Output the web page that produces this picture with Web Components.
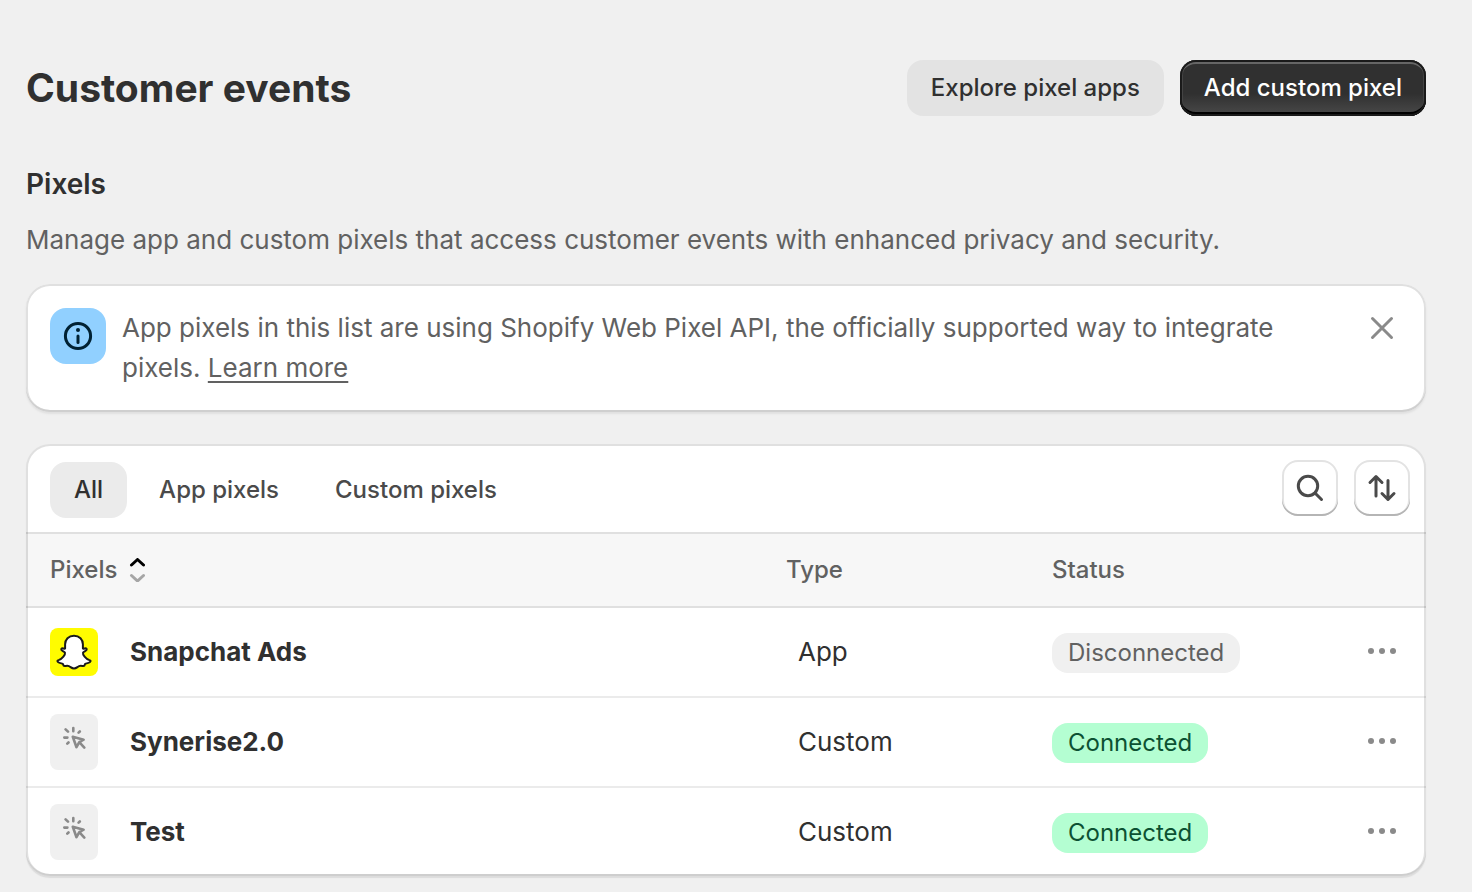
<!DOCTYPE html>
<html lang="en">
<head>
<meta charset="utf-8">
<meta name="viewport" content="width=device-width, initial-scale=1">
<title>Customer events</title>
<style>
  body {
    margin: 0;
    background: #f0f0f0;
    color: #303030;
    font-family: Inter, "Liberation Sans", sans-serif;
    font-size: 26px;
    line-height: 40px;
  }
</style>
</head>
<body>
<events-page>
  <ui-button slot="actions">Explore pixel apps</ui-button>
  <ui-button slot="actions" variant="primary">Add custom pixel</ui-button>
  <info-banner>App pixels in this list are using Shopify Web Pixel API, the officially supported way to integrate pixels. <a slot="link" href="#learn-more">Learn more</a></info-banner>
  <ui-card>
    <filter-bar></filter-bar>
    <pixel-table></pixel-table>
  </ui-card>
</events-page>

<script>
/** Shared base: renders `css` and `template` into an open shadow root. */
class BaseElement extends HTMLElement {
  constructor(){
    super()
    this.attachShadow({mode: 'open'})
  }

  connectedCallback(){
    this.shadowRoot.innerHTML = /* html */`
      <style>
        :host { display: block; }
        :host, * { box-sizing: border-box; }
        svg { display: block; fill: none; stroke: currentColor; stroke-width: 3; stroke-linecap: round; stroke-linejoin: round; }
        button { margin: 0; padding: 0; border: 0; background: none; color: inherit; font: inherit; cursor: pointer; }
        ${this.css}
      </style>
      ${this.template}`
    this.listen()
  }

  get css(){ return '' }
  get template(){ return '<slot></slot>' }
  listen(){}
}

/** Page frame with heading, actions and the pixels section. */
class EventsPage extends BaseElement {
  get css(){ return /* css */`
    :host { padding: 60px 46px 16px 26px; }
    header { display: flex; align-items: center; justify-content: space-between; gap: 16px; margin-bottom: 48px; }
    .actions { display: flex; gap: 16px; }
    h1, h2, p { margin: 0; }
    h1 { font-size: 39px; line-height: 56px; font-weight: 700; }
    h2 { font-size: 28px; line-height: 40px; font-weight: 600; margin-bottom: 16px; }
    p { color: #616161; margin-bottom: 24px; }
    .content { display: grid; gap: 32px; }
  `}

  get template(){ return /* html */`
    <header>
      <h1>Customer events</h1>
      <div class="actions"><slot name="actions"></slot></div>
    </header>
    <main>
      <h2>Pixels</h2>
      <p>Manage app and custom pixels that access customer events with enhanced privacy and security.</p>
      <div class="content"><slot></slot></div>
    </main>
  `}
}

class UiButton extends BaseElement {
  get css(){ return /* css */`
    button {
      height: 56px;
      padding: 0 24px;
      border-radius: 16px;
      background: #e3e3e3;
      font-size: 24px;
      line-height: 40px;
      font-weight: 500;
      white-space: nowrap;
    }
    :host([variant="primary"]) button {
      color: #fff;
      background: linear-gradient(#303030 60%, #4a4a4a);
      box-shadow: inset 0 0 0 2px #1a1a1a, inset 0 -4px 0 #000, inset 0 4px 0 #666, inset 3px 0 0 #444, inset -3px 0 0 #444;
    }
  `}

  get template(){ return '<button type="button"><slot></slot></button>' }
}

class InfoBanner extends BaseElement {
  get css(){ return /* css */`
    :host {
      display: flex;
      align-items: flex-start;
      gap: 16px;
      padding: 24px;
      border-radius: 24px;
      background: #fff;
      color: #616161;
      box-shadow: inset 0 -2px 0 #cfcfcf, inset 0 0 0 2px #e0e0e0, 0 2px 2px #e0e0e0;
    }
    .icon { flex: none; border-radius: 16px; background: #91d0ff; color: #002133; }
    .text { flex: 1; }
    button { flex: none; color: #8a8a8a; }
    ::slotted(a) { color: inherit; text-underline-offset: 4px; }
  `}

  get template(){ return /* html */`
    <span class="icon">
      <svg width="56" height="56" aria-hidden="true">
        <circle cx="28" cy="28" r="12.6"/>
        <path d="M28 28v6.5"/>
        <circle cx="28" cy="22" r="2" fill="currentColor" stroke="none"/>
      </svg>
    </span>
    <div class="text"><slot></slot><slot name="link"></slot></div>
    <button type="button" aria-label="Dismiss">
      <svg width="40" height="40" aria-hidden="true"><path d="M10.5 10.5l19 19M29.5 10.5l-19 19"/></svg>
    </button>
  `}

  listen(){
    this.shadowRoot.querySelector('button').addEventListener('click', () => this.remove())
  }
}

class UiCard extends BaseElement {
  get css(){ return /* css */`
    :host {
      position: relative;
      border-radius: 24px;
      background: #fff;
      box-shadow: 0 2px 1px #dcdcdc;
    }
    .body { overflow: hidden; border-radius: inherit; }
    /* The outline is drawn over the row separators */
    .outline {
      position: absolute;
      inset: 0;
      border-radius: inherit;
      pointer-events: none;
      box-shadow: inset 0 -2px 0 rgba(0, 0, 0, .08), inset 0 0 0 2px rgba(0, 0, 0, .12);
    }
  `}

  get template(){ return '<div class="body"><slot></slot></div><div class="outline"></div>' }
}

class FilterBar extends BaseElement {
  get css(){ return /* css */`
    :host {
      display: flex;
      align-items: flex-start;
      justify-content: space-between;
      padding: 16px 16px 14px 24px;
    }
    .tabs { display: flex; gap: 8px; padding-top: 2px; }
    .tabs button {
      height: 56px;
      padding: 0 24px;
      border-radius: 16px;
      color: #4a4a4a;
      font-size: 24px;
      font-weight: 500;
    }
    .tabs button[aria-selected="true"] { background: #ebebeb; color: #303030; }
    .tools { display: flex; gap: 16px; }
    .tools button {
      border-radius: 16px;
      color: #4a4a4a;
      box-shadow: inset 0 -2px 0 #b5b5b5, inset 0 0 0 2px #e3e3e3;
    }
  `}

  get template(){ return /* html */`
    <div class="tabs" role="tablist">
      <button type="button" role="tab" aria-selected="true">All</button>
      <button type="button" role="tab" aria-selected="false">App pixels</button>
      <button type="button" role="tab" aria-selected="false">Custom pixels</button>
    </div>
    <div class="tools">
      <button type="button" aria-label="Search">
        <svg width="56" height="56" aria-hidden="true"><circle cx="26" cy="26" r="9.7"/><path d="M33 33l6.5 6.5"/></svg>
      </button>
      <button type="button" aria-label="Sort">
        <svg width="56" height="56" aria-hidden="true"><path d="M22 36V17M16 22.5l6-6 6 6M34 20.5v19M28 33.5l6 6 6-6"/></svg>
      </button>
    </div>
  `}

  listen(){
    const tabs = this.shadowRoot.querySelectorAll('[role=tab]')
    tabs.forEach($tab => $tab.addEventListener('click', () => {
      tabs.forEach($el => $el.setAttribute('aria-selected', $el === $tab))
    }))
  }
}

class StatusBadge extends BaseElement {
  get css(){ return /* css */`
    :host {
      display: inline-block;
      vertical-align: top;
      padding: 0 16px;
      border-radius: 16px;
      background: #f0f0f0;
      color: #616161;
      font-size: 24px;
      line-height: 40px;
    }
    :host([tone="success"]) { background: #b4fed2; color: #0c5132; }
  `}
}

/** Small tile in front of a pixel's name; `kind` is "snapchat" or "custom". */
class PixelIcon extends BaseElement {
  get css(){ return /* css */`
    :host { flex: none; width: 48px; border-radius: 8px; background: #f0f0f0; color: #8a8a8a; }
    :host([kind="snapchat"]) { background: #fffc00; color: #1a1a1a; }
    :host([kind="custom"]) { height: 56px; padding: 12px; }
    svg { stroke-width: 2; }
    :host([kind="custom"]) svg { stroke-width: 2.6; }
  `}

  get template(){
    if (this.getAttribute('kind') === 'snapchat') return /* html */`
      <svg width="48" height="48" aria-hidden="true">
        <path fill="#fff" d="M24 7.7C18.5 7.7 15.1 11.5 15.1 16.3V20.6C13.8 21 12.3 19.6 11.4 20.8C10.6 22.8 14.6 23.3 15 24.8C15.4 26.5 12.5 31 8.5 32.1C7.3 32.4 7.1 33.2 7.9 33.9C9.2 35.2 11.6 35.3 12.7 35.8C13.4 36.2 13.1 37.5 14 37.9C15.2 38.3 17 37.4 18.9 38.1C20.6 38.8 21.6 40.4 24 40.4S27.4 38.8 29.1 38.1C31 37.4 32.8 38.3 34 37.9C34.9 37.5 34.6 36.2 35.3 35.8C36.4 35.3 38.8 35.2 40.1 33.9C40.9 33.2 40.7 32.4 39.5 32.1C35.5 31 32.6 26.5 33 24.8C33.4 23.3 37.4 22.8 36.6 20.8C35.7 19.6 34.2 21 32.9 20.6V16.3C32.9 11.5 29.5 7.7 24 7.7Z"/>
      </svg>`
    return /* html */`
      <svg width="24" height="24" aria-hidden="true">
        <path d="M11.3 2V5.2M3.6 3.3L6 5.7M2.3 11.6H5.4M6.5 16.5L5.3 17.7M16.6 6.7L17.8 5.5M10.8 10.8L21.6 13.7L17.3 16.2L14.5 21.2ZM17.3 16.2L22.3 21.6"/>
      </svg>`
  }
}

class PixelTable extends BaseElement {
  rows = [
    {icon: 'snapchat', name: 'Snapchat Ads', type: 'App', status: 'Disconnected', tone: 'neutral'},
    {icon: 'custom', name: 'Synerise2.0', type: 'Custom', status: 'Connected', tone: 'success'},
    {icon: 'custom', name: 'Test', type: 'Custom', status: 'Connected', tone: 'success'},
  ]

  get css(){ return /* css */`
    table { width: 100%; table-layout: fixed; border-collapse: separate; border-spacing: 0; text-align: left; }
    .type { width: 266px; }
    .status { width: 258px; }
    .menu { width: 140px; }
    th, td { padding: 0 0 0 24px; }
    th {
      height: 76px;
      border: solid #e0e0e0;
      border-width: 2px 0;
      background: #f7f7f7;
      color: #616161;
      font-size: 24px;
      font-weight: 500;
    }
    td { height: 90px; border-bottom: 2px solid #ebebeb; }
    tr:last-child td { height: 88px; border-bottom: 0; }
    td:nth-child(2) { padding-left: 36px; }
    td:nth-child(3) { padding-top: 2px; }
    td:last-child { padding: 0 16px 0 0; }
    .sort { display: flex; align-items: center; gap: 12px; }
    .name { display: flex; align-items: center; gap: 32px; font-weight: 700; }
    .more { display: block; margin-left: auto; color: #8a8a8a; }
    .more svg { fill: currentColor; stroke: none; }
  `}

  get template(){ return /* html */`
    <table>
      <colgroup><col><col class="type"><col class="status"><col class="menu"></colgroup>
      <thead>
        <tr>
          <th scope="col" aria-sort="ascending">
            <button class="sort" type="button">Pixels
              <svg width="16" height="24" aria-hidden="true"><path stroke="#000" d="M2.5 7l6-5.500 6 5.500"/><path stroke="#a6a6a6" d="M2.5 17.500l6 5.500 6-5.500"/></svg>
            </button>
          </th>
          <th scope="col">Type</th>
          <th scope="col">Status</th>
          <th></th>
        </tr>
      </thead>
      <tbody>${this.rows.map(row => this.renderRow(row)).join('')}</tbody>
    </table>
  `}

  renderRow({icon, name, type, status, tone}){ return /* html */`
    <tr>
      <td><div class="name"><pixel-icon kind="${icon}"></pixel-icon><span>${name}</span></div></td>
      <td>${type}</td>
      <td><status-badge tone="${tone}">${status}</status-badge></td>
      <td>
        <button class="more" type="button" aria-label="Actions for ${name}">
          <svg width="56" height="40" aria-hidden="true"><circle cx="17" cy="19" r="3"/><circle cx="28" cy="19" r="3"/><circle cx="39" cy="19" r="3"/></svg>
        </button>
      </td>
    </tr>
  `}
}

customElements.define('events-page', EventsPage)
customElements.define('ui-button', UiButton)
customElements.define('info-banner', InfoBanner)
customElements.define('ui-card', UiCard)
customElements.define('filter-bar', FilterBar)
customElements.define('status-badge', StatusBadge)
customElements.define('pixel-icon', PixelIcon)
customElements.define('pixel-table', PixelTable)
</script>
</body>
</html>
